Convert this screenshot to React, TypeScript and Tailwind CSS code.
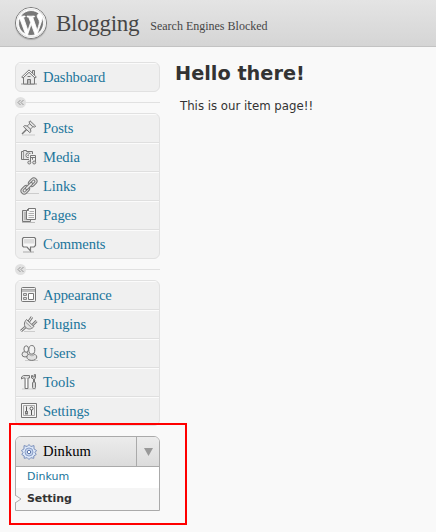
import React from "react";
import { FaWordpress } from "react-icons/fa";

type MenuEntry = {
  label: string;
  icon: React.ReactNode;
};

type IconProps = {
  children: React.ReactNode;
};

const Icon: React.FC<IconProps> = ({ children }) => (
  <svg
    viewBox="0 0 16 16"
    className="w-4 h-4 -mt-px shrink-0 overflow-visible"
    fill="none"
    stroke="#777"
    strokeWidth="1"
  >
    {children}
  </svg>
);

const HomeIcon = () => (
  <Icon>
    <path d="M0 15h16" stroke="#999" />
    <path d="M2.5 8.500V15h11V8.500L8 3z" fill="#e9e9e9" />
    <path d="M11.500 4V1.500h2v4.500" fill="#ddd" />
    <path d="M.7 8 8 .9 15.300 8l-1.300 1L8 3.300 2 9z" fill="#f8f8f8" />
    <path d="M6.500 15v-4.500h3V15" fill="#bbb" />
    <path d="M6.500 7.500h3" />
  </Icon>
);

const PinIcon = () => (
  <Icon>
    <path d="M1 15h13" stroke="#ccc" />
    <path d="M1 14 5.500 9.500" strokeWidth="1.500" />
    <path
      d="m9 .8 5.700 5.400-.9.9-2-.4-2.300 2.400.4 2.600-1.100 1L2.500 6.700l1-1.100 2.700.4 2.500-2.200-.6-2z"
      fill="#e2e2e2"
    />
    <path d="m6.200 6 3.300 3.100M8.700 3.800l3.100 2.900" />
    <path d="m8 5.500 2 2" stroke="#fff" />
  </Icon>
);

const MediaIcon = () => (
  <Icon>
    <path d="M.5 2.500h2v-1h3v1h6v8H.5z" fill="#e4e4e4" />
    <path d="M2.500 3v7" stroke="#999" />
    <circle cx="7.300" cy="6.300" r="2.400" fill="#fff" />
    <circle cx="7.300" cy="6.300" r=".6" />
    <path d="M9.500 13.500v-7h5v7" stroke="#f0f0f0" strokeWidth="3" />
    <path d="M9.500 13.500v-7h5v7M9.500 8.500h5" />
    <circle cx="8.300" cy="13.500" r="1.500" fill="#ddd" />
    <circle cx="13.200" cy="13.500" r="1.500" fill="#ddd" />
  </Icon>
);

const LinkIcon = () => (
  <Icon>
    <path d="M5 15.500h13" stroke="#ccc" />
    <g transform="rotate(-45 8 8)">
      <rect x="-2" y="4.800" width="9.500" height="6.400" rx="3.200" fill="#ddd" />
      <rect x=".2" y="6.800" width="5" height="2.400" rx="1.200" fill="#f4f4f4" />
      <rect x="8.500" y="4.800" width="9.500" height="6.400" rx="3.200" fill="#ddd" />
      <rect x="10.800" y="6.800" width="5" height="2.400" rx="1.200" fill="#f4f4f4" />
      <rect x="3.500" y="6.700" width="9" height="2.600" rx="1.300" fill="#eee" />
    </g>
  </Icon>
);

const PagesIcon = () => (
  <Icon>
    <path d="M1 15.500h13" stroke="#bbb" />
    <path d="M1.500 3.500h8v11h-8z" fill="#ddd" />
    <path d="M3 6h2M3 8h2M3 10h2M3 12h2" stroke="#999" />
    <path d="M7.500 1.500h7v11h-9v-9z" fill="#f8f8f8" />
    <path d="M5.500 3.500h2v-2" />
    <path
      d="M8.500 4.500H13M7.500 6.500H13M7.500 8.500H13M7.500 10.500H13"
      stroke="#b0b0b0"
    />
  </Icon>
);

const CommentIcon = () => (
  <Icon>
    <path d="M2 16h11" stroke="#aaa" />
    <path
      d="M2.500 1.500h11l1 1v7l-1.500 1.500H9.500V15L6 11H2.500L1.500 10V2.500z"
      fill="#f8f8f8"
      strokeWidth="1.200"
    />
    <path d="M3 3h10v4.500H3z" fill="#dcdcdc" stroke="none" />
  </Icon>
);

const AppearanceIcon = () => (
  <Icon>
    <rect x=".5" y=".5" width="14" height="14" rx="1" fill="#f4f4f4" />
    <path d="M1 2.500h13" stroke="#aaa" />
    <path d="M1 4h13" stroke="#888" />
    <path d="M2.500 6.500h3v2h-3zM2.500 10.500h3v2h-3z" fill="#ddd" stroke="#888" />
    <path d="M7.500 6.500h5v6h-5z" fill="#fff" />
  </Icon>
);

const PluginIcon = () => (
  <Icon>
    <path d="M3 15.500h11" stroke="#ccc" />
    <path d="m4.500 11-4.500 4" strokeWidth="2.800" />
    <path d="m4.500 11-4.500 4" stroke="#eee" />
    <path d="m7.500 6 3.500-5M11 9.500l4.500-4.500" strokeWidth="2.800" />
    <path d="m7.500 6 3.500-5M11 9.500l4.500-4.500" stroke="#f4f4f4" />
    <path
      d="m5.500 3.500 7.500 7c-2 2.500-5 3.200-7.300 1.700-3-2-3-5.700-.2-8.700z"
      fill="#e2e2e2"
    />
    <path d="m5 6.500 5.500 5" stroke="#999" />
  </Icon>
);

const UsersIcon = () => (
  <Icon>
    <path d="M4 15.500h13" stroke="#ccc" />
    <ellipse cx="4" cy="9.300" rx="3" ry="2.700" fill="#e8e8e8" />
    <ellipse cx="5.200" cy="4" rx="2.300" ry="3.200" fill="#f4f4f4" />
    <ellipse cx="10.800" cy="12" rx="5" ry="3.400" fill="#e0e0e0" />
    <ellipse cx="10.800" cy="4.800" rx="3" ry="4.300" fill="#f2f2f2" />
    <path d="M8.500 10c1.500 1 3 1 4.500 0" stroke="#aaa" />
  </Icon>
);

const ToolsIcon = () => (
  <Icon>
    <path d="M1 15h14" stroke="#ccc" />
    <path d="M.5 5V3l2-1.500h6v2.500H7v10.500H4V4H2z" fill="#ddd" />
    <path d="M5.500 5v9" stroke="#fff" />
    <path d="M12.500 8V5l-2-1V1.500h1.200V3h1.600V.5h1.200V4l-1 1v3" fill="#ddd" />
    <rect x="11.500" y="8" width="3" height="6.500" rx="1" fill="#d5d5d5" />
  </Icon>
);

const SettingsIcon = () => (
  <Icon>
    <path d="M.5.500h15v14H.5z" fill="#f8f8f8" />
    <path d="M2.500 2.500h11v10h-11z" fill="#eee" stroke="#aaa" />
    <path d="M5.500 3.500v5M10.500 7v5" stroke="#555" />
    <path d="M4 9.500h3" stroke="#555" />
    <rect x="4.500" y="8.500" width="2" height="2.500" fill="#bbb" />
    <circle cx="10.500" cy="5.500" r="1.500" fill="#fff" stroke="#555" />
  </Icon>
);

const GearIcon = () => (
  <svg viewBox="0 0 16 16" className="w-4 h-4 shrink-0" fill="none">
    <path
      d="M6.200 2.500 8 .5l1.800 2 3.200-.9v3.300l2.500 1.600L14 8.500l1.200 2-2.400 1.500v2.300l-3-.6L8 15.500l-1.800-1.800-3 .6V12L.8 10.500l1.200-2L.5 6.500 3 4.900V1.600z"
      fill="#dce7f7"
      stroke="#7187b5"
      strokeWidth=".9"
    />
    <circle cx="8" cy="8" r="4" fill="#c6d5ed" stroke="#8ca0ca" />
    <circle cx="8" cy="8" r="1.700" fill="#fff" stroke="#5d75a8" />
  </svg>
);

const contentMenu: MenuEntry[] = [
  { label: "Posts", icon: <PinIcon /> },
  { label: "Media", icon: <MediaIcon /> },
  { label: "Links", icon: <LinkIcon /> },
  { label: "Pages", icon: <PagesIcon /> },
  { label: "Comments", icon: <CommentIcon /> },
];

const siteMenu: MenuEntry[] = [
  { label: "Appearance", icon: <AppearanceIcon /> },
  { label: "Plugins", icon: <PluginIcon /> },
  { label: "Users", icon: <UsersIcon /> },
  { label: "Tools", icon: <ToolsIcon /> },
  { label: "Settings", icon: <SettingsIcon /> },
];

const MenuGroup: React.FC<{ items: MenuEntry[] }> = ({ items }) => (
  <ul className="border border-[#e1e1e1] rounded-md bg-[#f0f0f0] overflow-hidden divide-y divide-[#dfdfdf]">
    {items.map((item) => (
      <li key={item.label} className="h-[29px] last:h-7">
        <a
          href="#"
          className="flex items-center h-7 gap-[6px] pl-[5px] border-t border-[#fbfbfb] font-['Liberation_Serif',serif] text-[14.6px] tracking-[-0.1px] leading-none text-[#21759b]"
        >
          {item.icon}
          <span>{item.label}</span>
        </a>
      </li>
    ))}
  </ul>
);

const Separator = () => (
  <div className="flex items-center h-[21px]">
    <span className="flex items-center justify-center w-[11px] h-[11px] rounded-full bg-[#e1e1e1]">
      <svg viewBox="0 0 7 7" className="w-[7px] h-[7px]" fill="none" stroke="#999">
        <path d="m3.500 1-2.500 2.500L3.500 6M6.500 1 4 3.500 6.500 6" />
      </svg>
    </span>
    <span className="flex-1 h-px bg-[#e1e1e1]" />
  </div>
);

const PluginMenu = () => (
  <div className="mt-[10px] border border-[#aaa] rounded-t-md bg-white">
    <div className="flex h-[30px] border-b border-[#aaa] rounded-t-[5px] bg-linear-to-b from-[#ececec] to-[#dcdcdc]">
      <a
        href="#"
        className="flex items-center flex-1 gap-[6px] pl-[5px] font-['Liberation_Serif',serif] text-[14.6px] leading-none text-black"
      >
        <GearIcon />
        <span>Dinkum</span>
      </a>
      <button className="flex items-center justify-center w-[23px] border-l border-[#aaa]">
        <svg viewBox="0 0 9 8" className="w-[9px] h-2" fill="#999">
          <path d="M0 0h9L4.500 8z" />
        </svg>
      </button>
    </div>
    <div className="h-[21px] pl-[11px] text-[11px] leading-[19px] text-[#21759b]">
      Dinkum
    </div>
    <div className="relative h-[22px] pl-[11px] text-[11px] tracking-[-0.1px] font-bold leading-[21px] text-[#333] bg-[#f5f5f5]">
      <svg
        viewBox="0 0 7 8"
        className="absolute -left-px top-[7px] w-[7px] h-2"
        fill="#f9f9f9"
        stroke="#aaa"
      >
        <path d="M0 0 6 4 0 8" />
      </svg>
      Setting
    </div>
  </div>
);

const App: React.FC = () => {
  return (
    <div className="relative w-[436px] h-[532px] overflow-hidden bg-[#f9f9f9] font-['DejaVu_Sans',sans-serif]">
      <header className="flex items-center h-[47px] pl-[15px] border-b border-[#c3c3c3] bg-linear-to-b from-[#e4e4e4] to-[#d5d5d5] font-['Liberation_Serif',serif] text-[#464646]">
        <span className="flex items-center justify-center w-8 h-8 border border-[#777] rounded-full bg-white shadow-[0_1px_1px_#aaa]">
          <FaWordpress
            className="w-[30px] h-[30px] text-[#777]"
            stroke="#fff"
            strokeWidth="14"
          />
        </span>
        <h1 className="ml-[9px] text-[23px] tracking-[-0.3px] leading-none">
          Blogging
        </h1>
        <span className="ml-[11px] pt-[6px] text-xs leading-none">
          Search Engines Blocked
        </span>
      </header>

      <div className="flex">
        <nav className="w-[145px] ml-[15px] pt-[15px]">
          <MenuGroup items={[{ label: "Dashboard", icon: <HomeIcon /> }]} />
          <Separator />
          <MenuGroup items={contentMenu} />
          <Separator />
          <MenuGroup items={siteMenu} />
          <PluginMenu />
        </nav>
        <main className="pt-[15px] ml-[15px] text-[#333]">
          <h2 className="text-[19.3px] font-bold leading-6">Hello there!</h2>
          <p className="pl-[5px] mt-[12px] text-[11.75px] leading-4">
            This is our item page!!
          </p>
        </main>
      </div>

      {/* callout around the plugin menu */}
      <div className="absolute left-[9px] top-[423px] w-[178px] h-[102px] border-2 border-[#f00] pointer-events-none" />
    </div>
  );
};

export default App;
